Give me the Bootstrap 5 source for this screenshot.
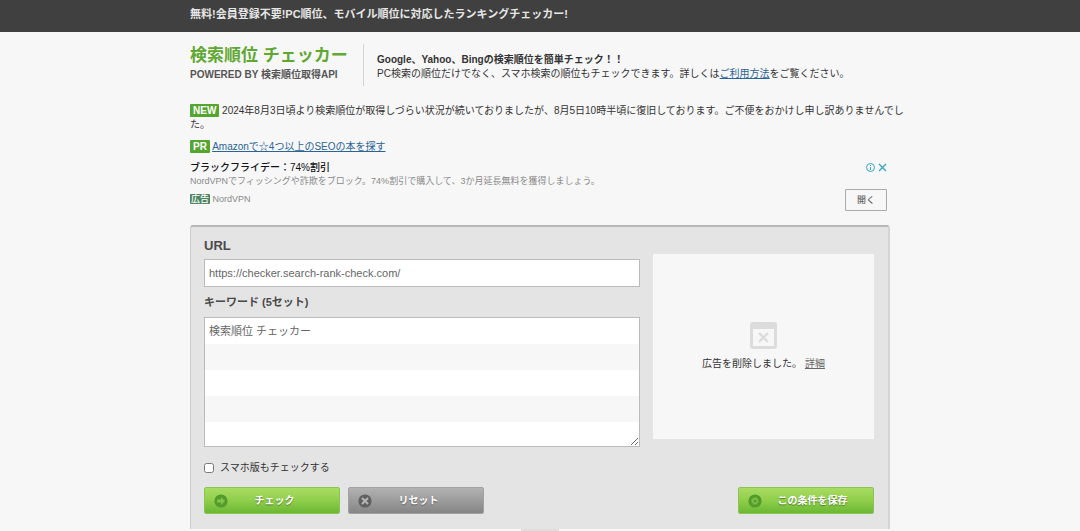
<!DOCTYPE html>
<html lang="ja">
<head>
<meta charset="utf-8">
<meta name="viewport" content="width=device-width, initial-scale=1">
<title>検索順位チェッカー</title>
<link href="https://cdn.jsdelivr.net/npm/bootstrap@5.3.0/dist/css/bootstrap.min.css" rel="stylesheet">
<style>
body{background:#f7f7f7;color:#333;font:10px/14px "Liberation Sans","Noto Sans CJK JP",sans-serif}
a{color:#2a6496}
.page-width{max-width:700px}
.top-strip{background:#404040;color:#e6e6e6;font-size:11px;line-height:28px;padding-bottom:4px}
.brand{width:174px;border-right:1px solid #d4d4d4;height:42px}
.brand h1{font-size:17px;line-height:24px;color:#5fa832}
.brand-sub{font-size:10px;line-height:14px;color:#555;font-weight:bold}
.intro{padding:9px 0 0 13px}
.notice{margin:18px -16px 8px 0}
.tag{background:#55a630;color:#fff;font-weight:bold;line-height:12px;padding:1px 3px;border-radius:1px}
.tag-ad{background:#4f8563;font-size:9px;line-height:10px;padding:0 1px;font-weight:500}
.pr-row{margin-bottom:7px}
.promo{font-size:9px;line-height:12px;color:#8a8a8a;min-height:50px;padding-right:3px}
.promo-title{font-size:10px;line-height:14px;color:#111;font-weight:500}
.promo-text{margin-bottom:6px}
.ad-marks{margin-top:2px}
.btn-open{font-size:9px;line-height:12px;padding:4px 11px;width:42px;height:22px;border:1px solid #aaa;border-radius:1px;color:#666;font-weight:500}
.panel{background:#e4e4e4;border:1px solid #ccc;border-top:2px solid #b8b8b8;border-right:2px solid #d4d4d4;border-bottom:0;border-radius:3px 3px 0 0;padding:11px 14px 15px 13px;margin-top:14px}
.panel-top{gap:13px}
.fields{flex:1 1 300px}
.field-label{font-size:11px;line-height:16px;font-weight:bold;color:#4a4a4a;margin:7px 0}
.label-lg{font-size:13px;margin:0 0 5px}
.field{border:1px solid #bbb;border-radius:0;padding:0 4px;font-size:11px;color:#666;line-height:26px;min-height:0}
input.field{height:28px}
textarea.field{height:130px;min-height:130px;resize:vertical;background-image:repeating-linear-gradient(#fff 0 26px,#f7f7f7 26px 52px)}
.side-ad{width:221px;height:185px;background:#f7f7f7;margin-top:16px}
.side-ad a{color:#666}
.tick-row{margin:14px 0 12px}
.tick{width:10px;height:10px;margin:0 6px 0 0}
.action{width:136px;height:27px;border-radius:2px;padding:0 18px 0 9px;color:#fff;font-size:10px;font-weight:bold;text-shadow:0 1px 1px #0006}
.action:hover{color:#fff}
.action span{flex:1}
.action-go{background:linear-gradient(#a9dc62,#8fce4b 50%,#6bb834);border:1px solid #8bc653}
.action-clear{background:linear-gradient(#b2b2b2,#858585);border:1px solid #a2a2a2}
.action-save{padding-right:10px}
.pull-tab{width:38px;height:2px;background:#dedede}
</style>
</head>
<body>
<div class="top-strip"><div class="page-width mx-auto fw-bold">無料!会員登録不要!PC順位、モバイル順位に対応したランキングチェッカー!</div></div>
<div class="page-width mx-auto">
  <header class="d-flex pt-2 mt-1">
    <div class="brand flex-shrink-0 text-nowrap">
      <h1 class="m-0 fw-bold">検索順位 チェッカー</h1>
      <div class="brand-sub">POWERED BY 検索順位取得API</div>
    </div>
    <div class="intro"><strong>Google、Yahoo、Bingの検索順位を簡単チェック！！</strong><br>PC検索の順位だけでなく、スマホ検索の順位もチェックできます。詳しくは<a href="#">ご利用方法</a>をご覧ください。</div>
  </header>
  <main>
    <p class="notice"><span class="tag">NEW</span> 2024年8月3日頃より検索順位が取得しづらい状況が続いておりましたが、8月5日10時半頃に復旧しております。ご不便をおかけし申し訳ありませんでした。</p>
    <p class="pr-row"><span class="tag">PR</span> <a href="#">Amazonで☆4つ以上のSEOの本を探す</a></p>
    <section class="promo d-flex justify-content-between">
      <div>
        <div class="promo-title">ブラックフライデー：74%割引</div>
        <div class="promo-text">NordVPNでフィッシングや詐欺をブロック。74%割引で購入して、3か月延長無料を獲得しましょう。</div>
        <div><span class="tag tag-ad">広告</span> NordVPN</div>
      </div>
      <div class="d-flex flex-column align-items-end justify-content-between">
        <svg class="ad-marks" width="21" height="9" viewBox="0 0 21 9" fill="none" stroke="#35a5c8"><circle cx="4.5" cy="4.5" r="4"/><path d="M4.5 4v3M4.5 2v1"/><path d="M13 1l7 7M20 1l-7 7" stroke-width="1.4"/></svg>
        <button type="button" class="btn btn-open text-nowrap">開く</button>
      </div>
    </section>
    <form class="panel">
      <div class="panel-top d-flex flex-wrap">
        <div class="fields">
          <label for="url" class="field-label label-lg d-block">URL</label>
          <input id="url" type="text" class="form-control field" value="https://checker.search-rank-check.com/">
          <label for="keywords" class="field-label d-block">キーワード (5セット)</label>
          <textarea id="keywords" class="form-control field">検索順位 チェッカー</textarea>
        </div>
        <div class="side-ad d-flex flex-column align-items-center justify-content-center gap-2">
          <svg width="27" height="27" viewBox="0 0 27 27"><rect width="27" height="27" rx="3" fill="#dcdcdc"/><path fill="#f7f7f7" d="M3 7h21v17H3z"/><path d="M9 11l9 9M18 11l-9 9" stroke="#dcdcdc" stroke-width="2.4"/></svg>
          <div>広告を削除しました。 <a href="#">詳細</a></div>
        </div>
      </div>
      <div class="tick-row d-flex align-items-center"><input id="mobile" type="checkbox" class="tick"><label for="mobile">スマホ版もチェックする</label></div>
      <div class="d-flex flex-wrap gap-2">
        <button type="button" class="btn action action-go d-flex align-items-center"><svg width="14" height="14" viewBox="0 0 14 14"><circle cx="7" cy="7" r="6.6" fill="#559b2b"/><path fill="#80c449" d="M3 5.5h4V3l4 4-4 4V8.5H3z"/></svg><span>チェック</span></button>
        <button type="reset" class="btn action action-clear d-flex align-items-center"><svg width="14" height="14" viewBox="0 0 14 14"><circle cx="7" cy="7" r="6.6" fill="#606060"/><path d="M4 4l6 6M10 4l-6 6" stroke="#b5b5b5" stroke-width="2"/></svg><span>リセット</span></button>
        <button type="button" class="btn action action-go action-save d-flex align-items-center ms-auto"><svg width="14" height="14" viewBox="0 0 14 14"><circle cx="7" cy="7" r="6.6" fill="#559b2b"/><circle cx="7" cy="7" r="2.2" fill="none" stroke="#80c449" stroke-width="1.4"/><circle cx="7" cy="7" r="3.4" fill="none" stroke="#80c449" stroke-dasharray="1.3"/></svg><span>この条件を保存</span></button>
      </div>
    </form>
    <div class="pull-tab mx-auto"></div>
  </main>
</div>
<script src="https://cdn.jsdelivr.net/npm/bootstrap@5.3.0/dist/js/bootstrap.bundle.min.js"></script>
</body>
</html>
